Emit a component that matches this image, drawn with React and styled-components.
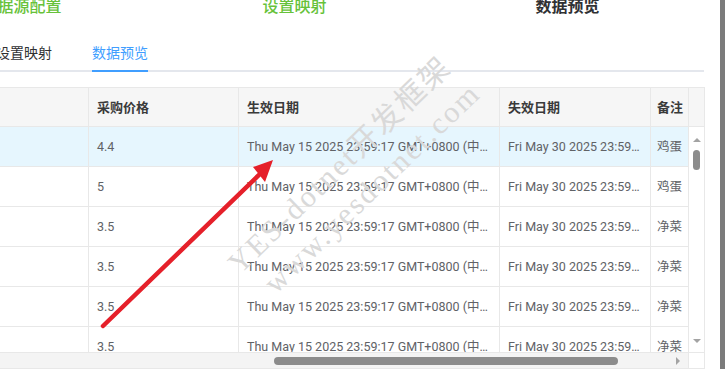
import React from "react";
import styled, { createGlobalStyle } from "styled-components";

const Global = createGlobalStyle`
  html, body {
    margin: 0;
    padding: 0;
    background: #fff;
    overflow: hidden;
  }
  body {
    font-family: "Open Sans", "Noto Sans CJK SC", sans-serif;
  }
`;

const steps = [
  { title: "数据源配置", color: "#67c23a" },
  { title: "设置映射", color: "#67c23a" },
  { title: "数据预览", color: "#303133", bold: true },
];

const tabs = [
  { title: "设置映射" },
  { title: "数据预览", active: true },
];

const longDate = "Thu May 15 2025 23:59:17 GMT+0800 (中国标准时间)";
const endDate = "Fri May 30 2025 23:59:17 GMT+0800 (中国标准时间)";

// last column runs on under the vertical scrollbar, so it is only clipped
const columns = [
  { key: "name", title: "", width: 89 },
  { key: "price", title: "采购价格", width: 150 },
  { key: "start", title: "生效日期", width: 261 },
  { key: "end", title: "失效日期", width: 151 },
  { key: "remark", title: "备注", width: 38, clip: true },
];

const rows = [
  { price: "4.4", start: longDate, end: endDate, remark: "鸡蛋", selected: true },
  { price: "5", start: longDate, end: endDate, remark: "鸡蛋" },
  { price: "3.5", start: longDate, end: endDate, remark: "净菜" },
  { price: "3.5", start: longDate, end: endDate, remark: "净菜" },
  { price: "3.5", start: longDate, end: endDate, remark: "净菜" },
  { price: "3.5", start: longDate, end: endDate, remark: "净菜" },
];

const App = () => {
  return (
    <Page>
      <Global />
      <Main>
        <Steps>
          {steps.map((s) => (
            <StepTitle key={s.title} color={s.color} $bold={s.bold}>
              {s.title}
            </StepTitle>
          ))}
        </Steps>

        <TabBar>
          {tabs.map((t) => (
            <TabItem key={t.title} $active={t.active}>
              {t.title}
            </TabItem>
          ))}
        </TabBar>

        <Table>
          <HeaderRow>
            <HeaderCells>
              {columns.map((c) => (
                <HeadCell key={c.key} $w={c.width} $clip={c.clip}>
                  {c.title}
                </HeadCell>
              ))}
            </HeaderCells>
            <Gutter />
          </HeaderRow>

          <Body>
            <Viewport>
              {rows.map((r, i) => (
                <Row key={i} $selected={r.selected}>
                  {columns.map((c) => (
                    <Cell key={c.key} $w={c.width} $clip={c.clip}>
                      {r[c.key]}
                    </Cell>
                  ))}
                </Row>
              ))}
            </Viewport>
            <VScroll>
              <ArrowUp />
              <VThumb />
              <Spacer />
              <ArrowDown />
            </VScroll>
          </Body>

          <HScrollRow>
            <HTrack>
              <HThumb style={{ marginLeft: 274, width: 344 }} />
              <ArrowRight />
            </HTrack>
            <Corner />
          </HScrollRow>
        </Table>
      </Main>
      <SideBar />

      <Overlay viewBox="0 0 725 369" width="725" height="369">
        <g
          fill="#d9d9d9"
          fontFamily="'Liberation Serif', 'Noto Sans CJK SC', serif"
          fontSize="30"
          letterSpacing="2.5"
          transform="rotate(-44 240 275)"
        >
          <text x="240" y="275">YES-dotnet开发框架</text>
          <text x="252" y="314">www.yesdotnet.com</text>
        </g>
        <line
          x1="103"
          y1="326"
          x2="262"
          y2="172"
          stroke="#e5202a"
          strokeWidth="4.5"
          strokeLinecap="round"
        />
        <polygon points="273,160 253,167 265,182" fill="#e5202a" />
      </Overlay>
    </Page>
  );
};

export default App;

const Page = styled.div`
  position: relative;
  display: flex;
  width: 725px;
  height: 369px;
  overflow: hidden;
`;

const Main = styled.div`
  flex: none;
  width: 720px;
  overflow: hidden;
`;

const SideBar = styled.div`
  flex: none;
  width: 5px;
  background: #7b7b7b;
`;

const Steps = styled.div`
  display: grid;
  grid-template-columns: repeat(3, 273px);
  margin: -5px 0 0 -115px;
  height: 22px;
`;

const StepTitle = styled.div`
  text-align: center;
  font-size: 16px;
  line-height: 22px;
  color: ${(p) => p.color};
  font-weight: ${(p) => (p.$bold ? 700 : 500)};
  white-space: nowrap;
`;

const TabBar = styled.div`
  display: flex;
  width: 704px;
  height: 40px;
  margin-top: 15px;
  box-shadow: inset 0 -2px 0 #e4e7ed;
`;

const TabItem = styled.div`
  height: 40px;
  line-height: 41px;
  font-size: 14px;
  white-space: nowrap;
  margin-right: 40px;
  color: ${(p) => (p.$active ? "#409eff" : "#303133")};
  box-shadow: ${(p) => (p.$active ? "inset 0 -2px 0 #409eff" : "none")};

  &:first-child {
    margin-left: -4px;
  }
`;

const Table = styled.div`
  width: 704px;
  margin-top: 15px;
  border: 1px solid #e8e8e8;
  border-left: none;
`;

const HeaderRow = styled.div`
  display: flex;
  height: 38px;
  background: #f6f6f6;
  border-bottom: 1px solid #e8e8e8;
`;

const HeaderCells = styled.div`
  display: flex;
  width: 689px;
  flex: none;
  overflow: hidden;
`;

const HeadCell = styled.div`
  flex: none;
  box-sizing: border-box;
  width: ${(p) => p.$w}px;
  padding: ${(p) => (p.$clip ? "0 0 0 6px" : "0 8px")};
  border-right: 1px solid #e8e8e8;
  line-height: 38px;
  font-size: 13px;
  font-weight: 700;
  color: #3a3a3a;
  white-space: nowrap;
  overflow: hidden;
`;

const Gutter = styled.div`
  flex: 1;
  border-left: 1px solid #e8e8e8;
  margin-left: -1px;
`;

const Body = styled.div`
  display: flex;
  height: 225px;
`;

const Viewport = styled.div`
  width: 689px;
  flex: none;
  overflow: hidden;
`;

const Row = styled.div`
  display: flex;
  height: 40px;
  box-sizing: border-box;
  border-bottom: 1px solid #e8e8e8;
  background: ${(p) => (p.$selected ? "#e6f6fe" : "#fff")};
`;

const Cell = styled.div`
  flex: none;
  box-sizing: border-box;
  width: ${(p) => p.$w}px;
  padding: ${(p) => (p.$clip ? "0 0 0 6px" : "0 8px")};
  border-right: 1px solid #e8e8e8;
  line-height: 40px;
  font-family: Roboto, "Noto Sans CJK SC", sans-serif;
  font-size: 12.5px;
  color: #606266;
  white-space: nowrap;
  overflow: hidden;
  text-overflow: ${(p) => (p.$clip ? "clip" : "ellipsis")};
`;

const VScroll = styled.div`
  flex: 1;
  display: flex;
  flex-direction: column;
  align-items: center;
  border-left: 1px solid #e8e8e8;
  margin-left: -1px;
  padding: 11px 0 9px;
`;

const ArrowUp = styled.div`
  width: 0;
  height: 0;
  border-left: 4px solid transparent;
  border-right: 4px solid transparent;
  border-bottom: 4px solid #a3a3a3;
`;

const ArrowDown = styled.div`
  width: 0;
  height: 0;
  border-left: 4px solid transparent;
  border-right: 4px solid transparent;
  border-top: 4px solid #a3a3a3;
`;

const VThumb = styled.div`
  width: 7px;
  height: 20px;
  margin-top: 8px;
  border-radius: 4px;
  background: #8c8c8c;
`;

const Spacer = styled.div`
  flex: 1;
`;

const HScrollRow = styled.div`
  display: flex;
  height: 15px;
  border-top: 1px solid #e8e8e8;
`;

const HTrack = styled.div`
  display: flex;
  align-items: center;
  width: 689px;
  flex: none;
  background: #f4f4f4;
`;

const HThumb = styled.div`
  height: 8px;
  border-radius: 4px;
  background: #8c8c8c;
`;

const ArrowRight = styled.div`
  margin-left: auto;
  margin-right: 9px;
  width: 0;
  height: 0;
  border-top: 4px solid transparent;
  border-bottom: 4px solid transparent;
  border-left: 4px solid #a3a3a3;
`;

const Corner = styled.div`
  flex: 1;
  border-left: 1px solid #e8e8e8;
  margin-left: -1px;
  background: #fff;
`;

const Overlay = styled.svg`
  position: absolute;
  top: 0;
  left: 0;
  pointer-events: none;
`;
